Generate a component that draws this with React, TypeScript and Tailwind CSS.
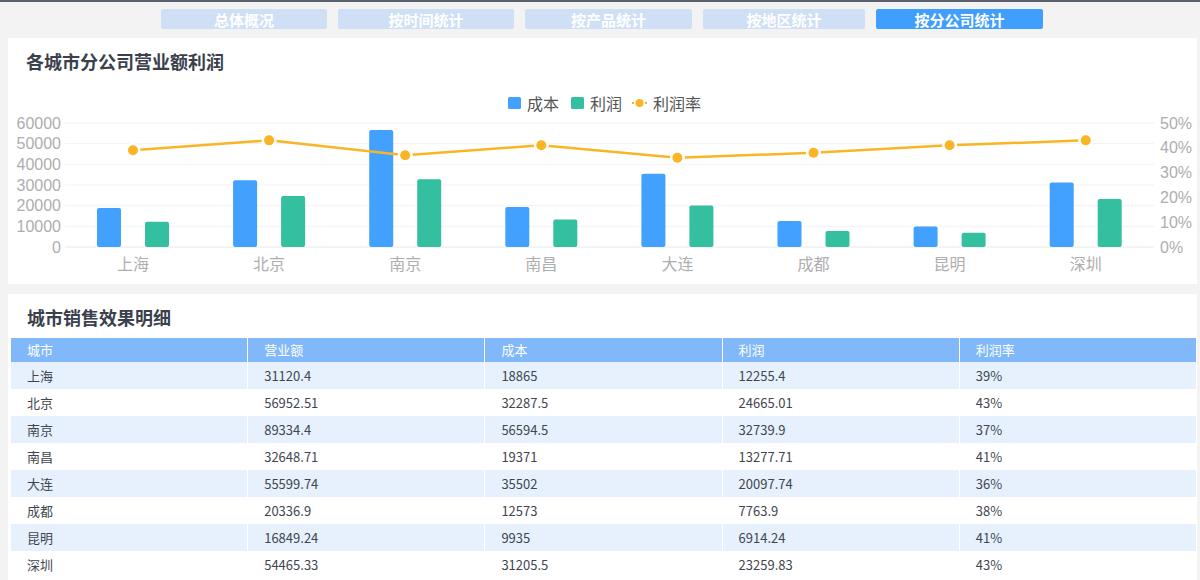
import React from 'react';

const tabs = [
  { label: '总体概况', w: 'w-[166px]' },
  { label: '按时间统计', w: 'w-[176px]' },
  { label: '按产品统计', w: 'w-[167px]' },
  { label: '按地区统计', w: 'w-[162px]' },
  { label: '按分公司统计', w: 'w-[167px]', active: true },
];

const rows = [
  { city: '上海', revenue: '31120.4', cost: 18865, costText: '18865', profit: 12255.4, profitText: '12255.4', rate: 39 },
  { city: '北京', revenue: '56952.51', cost: 32287.5, costText: '32287.5', profit: 24665.01, profitText: '24665.01', rate: 43 },
  { city: '南京', revenue: '89334.4', cost: 56594.5, costText: '56594.5', profit: 32739.9, profitText: '32739.9', rate: 37 },
  { city: '南昌', revenue: '32648.71', cost: 19371, costText: '19371', profit: 13277.71, profitText: '13277.71', rate: 41 },
  { city: '大连', revenue: '55599.74', cost: 35502, costText: '35502', profit: 20097.74, profitText: '20097.74', rate: 36 },
  { city: '成都', revenue: '20336.9', cost: 12573, costText: '12573', profit: 7763.9, profitText: '7763.9', rate: 38 },
  { city: '昆明', revenue: '16849.24', cost: 9935, costText: '9935', profit: 6914.24, profitText: '6914.24', rate: 41 },
  { city: '深圳', revenue: '54465.33', cost: 31205.5, costText: '31205.5', profit: 23259.83, profitText: '23259.83', rate: 43 },
];

const BLUE = '#42a0ff';
const GREEN = '#33bfa0';
const ORANGE = '#f9b526';
const AXIS_TEXT = '#aeaeae';
const NUM_FONT = '"Liberation Sans", Arial, sans-serif';

// chart geometry (svg coords, svg sits at page x=8, y=84)
const Y0 = 163;
const PLOT_H = 124;
const X_LEFT = 57;
const X_RIGHT = 1146;
const STEP = 136.1;
const FIRST = 125;

const CompanyChart: React.FC = () => {
  const cx = (i: number) => FIRST + STEP * i;
  const barY = (v: number) => Y0 - (v / 60000) * PLOT_H;
  const rateY = (r: number) => Y0 - (r / 50) * PLOT_H;
  const linePts = rows.map((r, i) => `${cx(i)},${rateY(r.rate)}`).join(' ');

  return (
    <svg width="1189" height="200" className="block" style={{ fontFamily: '"Noto Sans CJK SC", "Noto Sans", sans-serif' }}>
      {/* Legend */}
      <rect x="500" y="13" width="13" height="12" rx="1.5" fill={BLUE} />
      <text x="519" y="19" dominantBaseline="central" fontSize="16" fill="#555">成本</text>
      <rect x="563" y="13" width="13" height="12" rx="1.5" fill={GREEN} />
      <text x="582" y="19" dominantBaseline="central" fontSize="16" fill="#555">利润</text>
      <line x1="624" y1="19" x2="639" y2="19" stroke={ORANGE} strokeWidth="2" />
      <circle cx="631.5" cy="19" r="5.5" fill="#fff" />
      <circle cx="631.5" cy="19" r="4" fill={ORANGE} />
      <text x="645" y="19" dominantBaseline="central" fontSize="16" fill="#555">利润率</text>

      {/* Grid + left axis */}
      {[0, 1, 2, 3, 4, 5, 6].map((i) => {
        const y = Y0 - (i * PLOT_H) / 6;
        return (
          <g key={i}>
            <line x1={X_LEFT} y1={y} x2={X_RIGHT} y2={y} stroke={i === 0 ? '#e8e8e8' : '#f2f2f2'} strokeWidth="1" />
            <text
              x="53"
              y={y}
              textAnchor="end"
              dominantBaseline="central"
              fontSize="16"
              fill={AXIS_TEXT}
              style={{ fontFamily: NUM_FONT }}
            >
              {i * 10000}
            </text>
          </g>
        );
      })}

      {/* Right axis */}
      {[0, 1, 2, 3, 4, 5].map((i) => (
        <text
          key={i}
          x="1152"
          y={Y0 - (i * PLOT_H) / 5}
          dominantBaseline="central"
          fontSize="16"
          fill={AXIS_TEXT}
          style={{ fontFamily: NUM_FONT }}
        >
          {i * 10}%
        </text>
      ))}

      {/* Bars */}
      {rows.map((r, i) => (
        <g key={r.city}>
          <rect x={cx(i) - 36} y={barY(r.cost)} width="24" height={Y0 - barY(r.cost)} rx="2" fill={BLUE} />
          <rect x={cx(i) + 12} y={barY(r.profit)} width="24" height={Y0 - barY(r.profit)} rx="2" fill={GREEN} />
          <text x={cx(i)} y="179" textAnchor="middle" dominantBaseline="central" fontSize="16" fill={AXIS_TEXT}>
            {r.city}
          </text>
        </g>
      ))}

      {/* Rate line */}
      <polyline points={linePts} fill="none" stroke={ORANGE} strokeWidth="2.5" />
      {rows.map((r, i) => (
        <g key={`p-${r.city}`}>
          <circle cx={cx(i)} cy={rateY(r.rate)} r="7.5" fill="#fff" />
          <circle cx={cx(i)} cy={rateY(r.rate)} r="5" fill={ORANGE} />
        </g>
      ))}
    </svg>
  );
};

const App: React.FC = () => {
  return (
    <div className="min-h-[580px] h-[580px] overflow-hidden bg-[#f3f3f3] border-t-2 border-[#59606b] font-['Noto_Sans_CJK_SC','Noto_Sans',sans-serif]">
      {/* Tabs */}
      <div className="flex gap-[11px] pl-[161px] pt-[7px]">
        {tabs.map((t) => (
          <div
            key={t.label}
            className={`${t.w} h-[20px] rounded-[2px] flex items-center justify-center text-[15px] font-bold text-white leading-none ${
              t.active ? 'bg-[#409eff]' : 'bg-[#cfe0f6]'
            }`}
          >
            {t.label}
          </div>
        ))}
      </div>

      <div className="pl-[8px] pr-[3px] pt-[9px] flex flex-col gap-[10px]">
        {/* Chart panel */}
        <div className="bg-white h-[246px]">
          <div className="h-[46px] pt-[12px] pl-[18px] text-[18px] leading-[22px] font-bold text-[#3a414d]">
            各城市分公司营业额利润
          </div>
          <CompanyChart />
        </div>

        {/* Table panel */}
        <div className="bg-white pl-[3px] pr-[1px] h-[300px]">
          <div className="h-[44px] pt-[12px] pl-[16px] text-[18px] leading-[22px] font-bold text-[#3a414d]">
            城市销售效果明细
          </div>
          <div className="flex flex-col text-[13px]">
            <div className="grid grid-cols-5 gap-x-px h-[24px] text-white">
              {['城市', '营业额', '成本', '利润', '利润率'].map((h) => (
                <div key={h} className="bg-[#80b8fa] flex items-center pl-[16px]">
                  {h}
                </div>
              ))}
            </div>
            {rows.map((r, i) => (
              <div key={r.city} className="grid grid-cols-5 gap-x-px h-[27px] text-[#3f4650]">
                {[r.city, r.revenue, r.costText, r.profitText, `${r.rate}%`].map((v, j) => (
                  <div
                    key={j}
                    className={`flex items-center pl-[16px] ${i % 2 === 0 ? 'bg-[#e6f1fd]' : 'bg-white'}`}
                  >
                    {v}
                  </div>
                ))}
              </div>
            ))}
          </div>
        </div>
      </div>
    </div>
  );
};

export default App;
